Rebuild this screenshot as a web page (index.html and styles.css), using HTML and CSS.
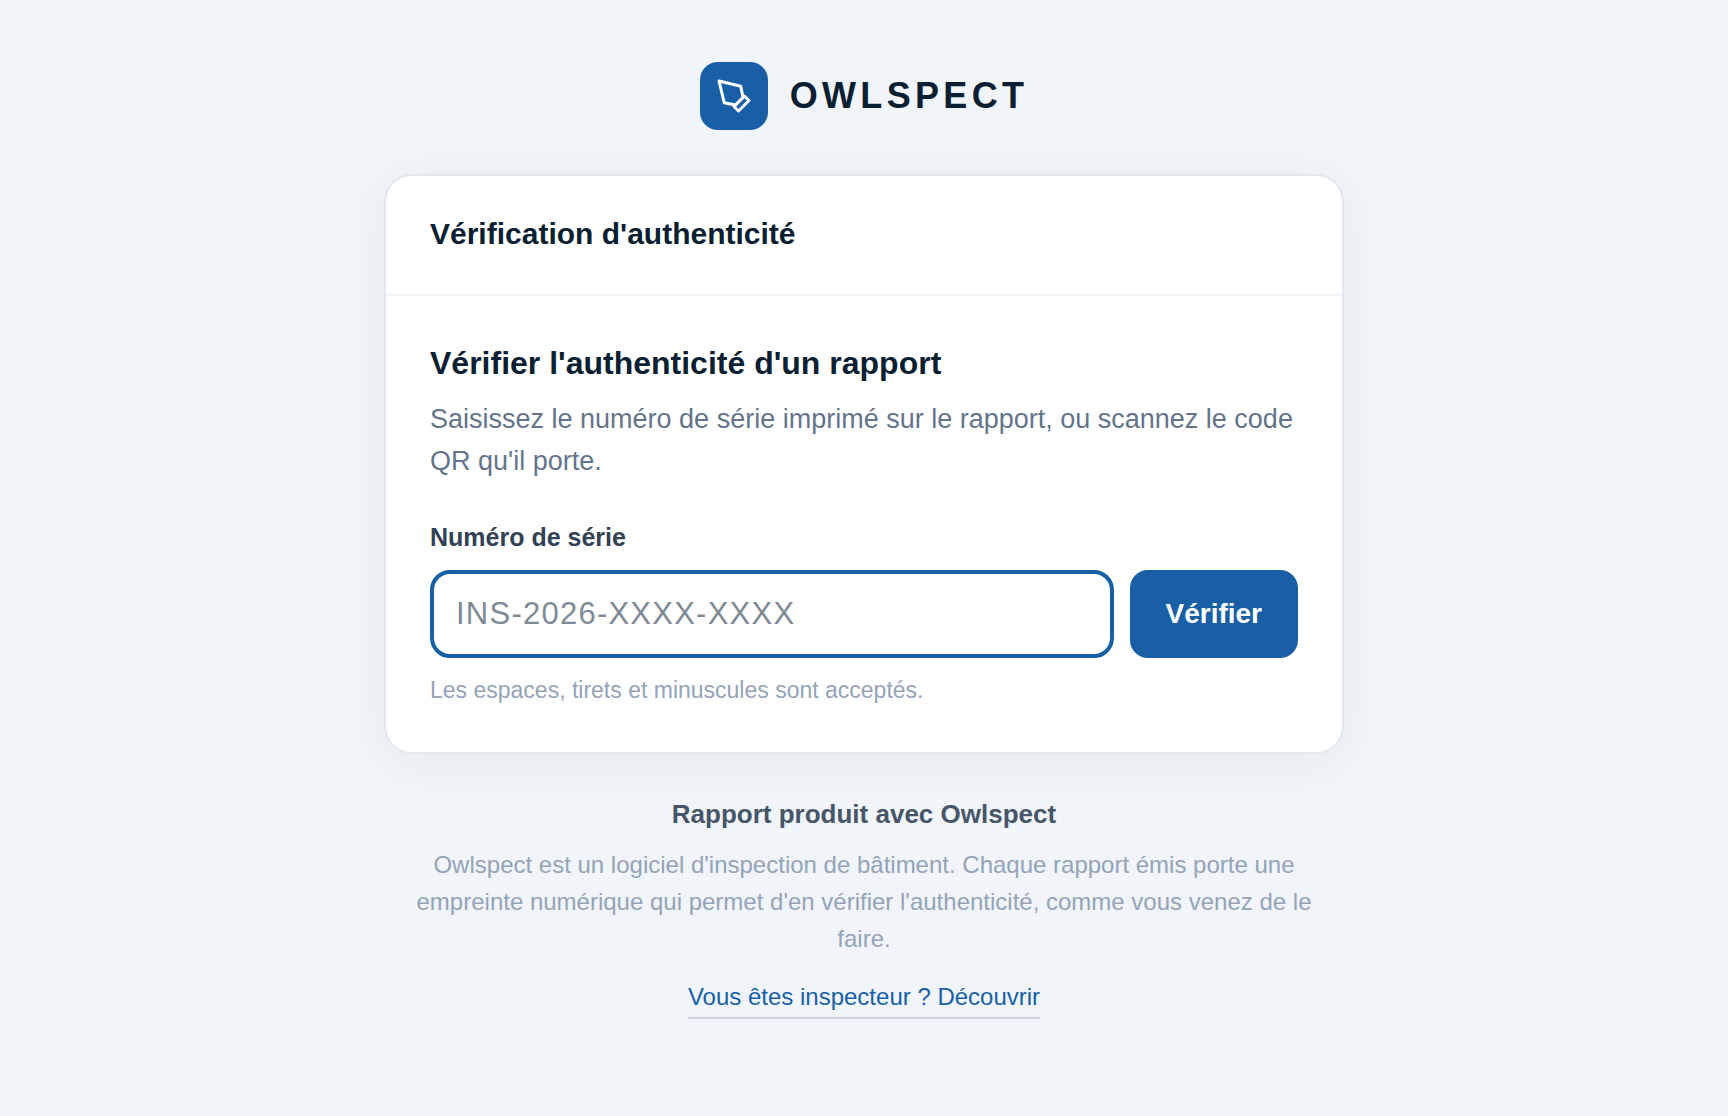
FILE: index.html
```html
<!DOCTYPE html>
<html lang="fr">
<head>
    <meta charset="UTF-8">
    <meta name="viewport" content="width=device-width, initial-scale=1.0">
    <title>Owlspect - Vérification d'authenticité</title>
    <link rel="stylesheet" href="styles.css">
</head>
<body>
    <div class="page">
        <header class="brand">
            <span class="brand-logo">
                <svg viewBox="0 0 24 24" aria-hidden="true">
                    <path d="M12 19l7-7 3 3-7 7-3-3z"/>
                    <path d="M18 13l-1.5-7.5L2 2l3.5 14.5L13 18l5-5z"/>
                </svg>
            </span>
            <span class="brand-name">OWLSPECT</span>
        </header>
        <main class="card">
            <div class="card-header">
                <h1>Vérification d'authenticité</h1>
            </div>
            <div class="card-body">
                <h2>Vérifier l'authenticité d'un rapport</h2>
                <p class="intro">Saisissez le numéro de série imprimé sur le rapport, ou scannez le code QR qu'il porte.</p>
                <form action="#" method="get">
                    <label for="serial">Numéro de série</label>
                    <div class="form-row">
                        <input type="text" id="serial" name="serial" placeholder="INS-2026-XXXX-XXXX" autocomplete="off" aria-describedby="serial-hint">
                        <button type="submit">Vérifier</button>
                    </div>
                    <p class="hint" id="serial-hint">Les espaces, tirets et minuscules sont acceptés.</p>
                </form>
            </div>
        </main>
        <footer class="footer">
            <p class="footer-title">Rapport produit avec Owlspect</p>
            <p class="footer-text">Owlspect est un logiciel d'inspection de bâtiment. Chaque rapport émis porte une empreinte numérique qui permet d'en vérifier l'authenticité, comme vous venez de le faire.</p>
            <a class="footer-link" href="#">Vous êtes inspecteur ? Découvrir</a>
        </footer>
    </div>
</body>
</html>
```
FILE: styles.css
```css
* {
    box-sizing: border-box;
}
body {
    margin: 0;
    min-height: 100vh;
    background: #f1f5f9;
    color: #0b1f33;
    font-family: "Liberation Sans", Arial, sans-serif;
}
h1, h2, p {
    margin: 0;
}
.page {
    max-width: 1024px;
    margin: 0 auto;
    padding: 62px 32px;
}
.brand {
    display: flex;
    justify-content: center;
    align-items: center;
    gap: 22px;
    margin-bottom: 44px;
}
.brand-logo {
    display: flex;
    justify-content: center;
    align-items: center;
    width: 68px;
    height: 68px;
    border-radius: 18px;
    background: #185fa5;
}
.brand-logo svg {
    width: 36px;
    height: 36px;
    fill: none;
    stroke: #fff;
    stroke-width: 2;
    stroke-linecap: round;
    stroke-linejoin: round;
}
.brand-name {
    font-size: 36px;
    font-weight: 700;
    letter-spacing: 0.12em;
}
.card {
    background: #fff;
    border: 2px solid #e2e8f0;
    border-radius: 28px;
    box-shadow: 0 8px 48px rgba(15, 23, 42, 0.05);
}
.card-header {
    padding: 40px 44px 42px;
    border-bottom: 2px solid #f1f5f9;
}
.card-header h1 {
    font-size: 30px;
    line-height: 36px;
}
.card-body {
    padding: 44px;
}
.card-body h2 {
    margin-bottom: 12px;
    font-size: 32px;
    line-height: 46px;
}
.intro {
    margin-bottom: 36px;
    color: #64748b;
    font-size: 27px;
    line-height: 42px;
}
label {
    display: block;
    margin-bottom: 14px;
    color: #334155;
    font-size: 25px;
    font-weight: 700;
    line-height: 38px;
}
.form-row {
    display: flex;
    gap: 16px;
}
.form-row input {
    flex: 1;
    min-width: 0;
    height: 88px;
    padding: 0 22px;
    border: 4px solid #185fa5;
    border-radius: 20px;
    background: #fff;
    color: #0b1f33;
    font-family: inherit;
    font-size: 31px;
    letter-spacing: 0.04em;
    outline: none;
}
.form-row input::placeholder {
    color: #7f8a96;
}
.form-row button {
    padding: 0 36px;
    border: none;
    border-radius: 18px;
    background: #185fa5;
    color: #fff;
    font-family: inherit;
    font-size: 28px;
    font-weight: 700;
    cursor: pointer;
}
.hint {
    margin-top: 14px;
    color: #94a3b8;
    font-size: 23px;
    line-height: 36px;
}
.footer {
    padding: 40px 24px 0;
    text-align: center;
}
.footer-title {
    margin-bottom: 12px;
    color: #475569;
    font-size: 26px;
    font-weight: 700;
    line-height: 40px;
}
.footer-text {
    margin-bottom: 20px;
    color: #94a3b8;
    font-size: 24px;
    line-height: 37px;
}
.footer-link {
    display: inline-block;
    border-bottom: 2px solid #cbd5e1;
    color: #185fa5;
    font-size: 24px;
    line-height: 40px;
    text-decoration: none;
}
```
